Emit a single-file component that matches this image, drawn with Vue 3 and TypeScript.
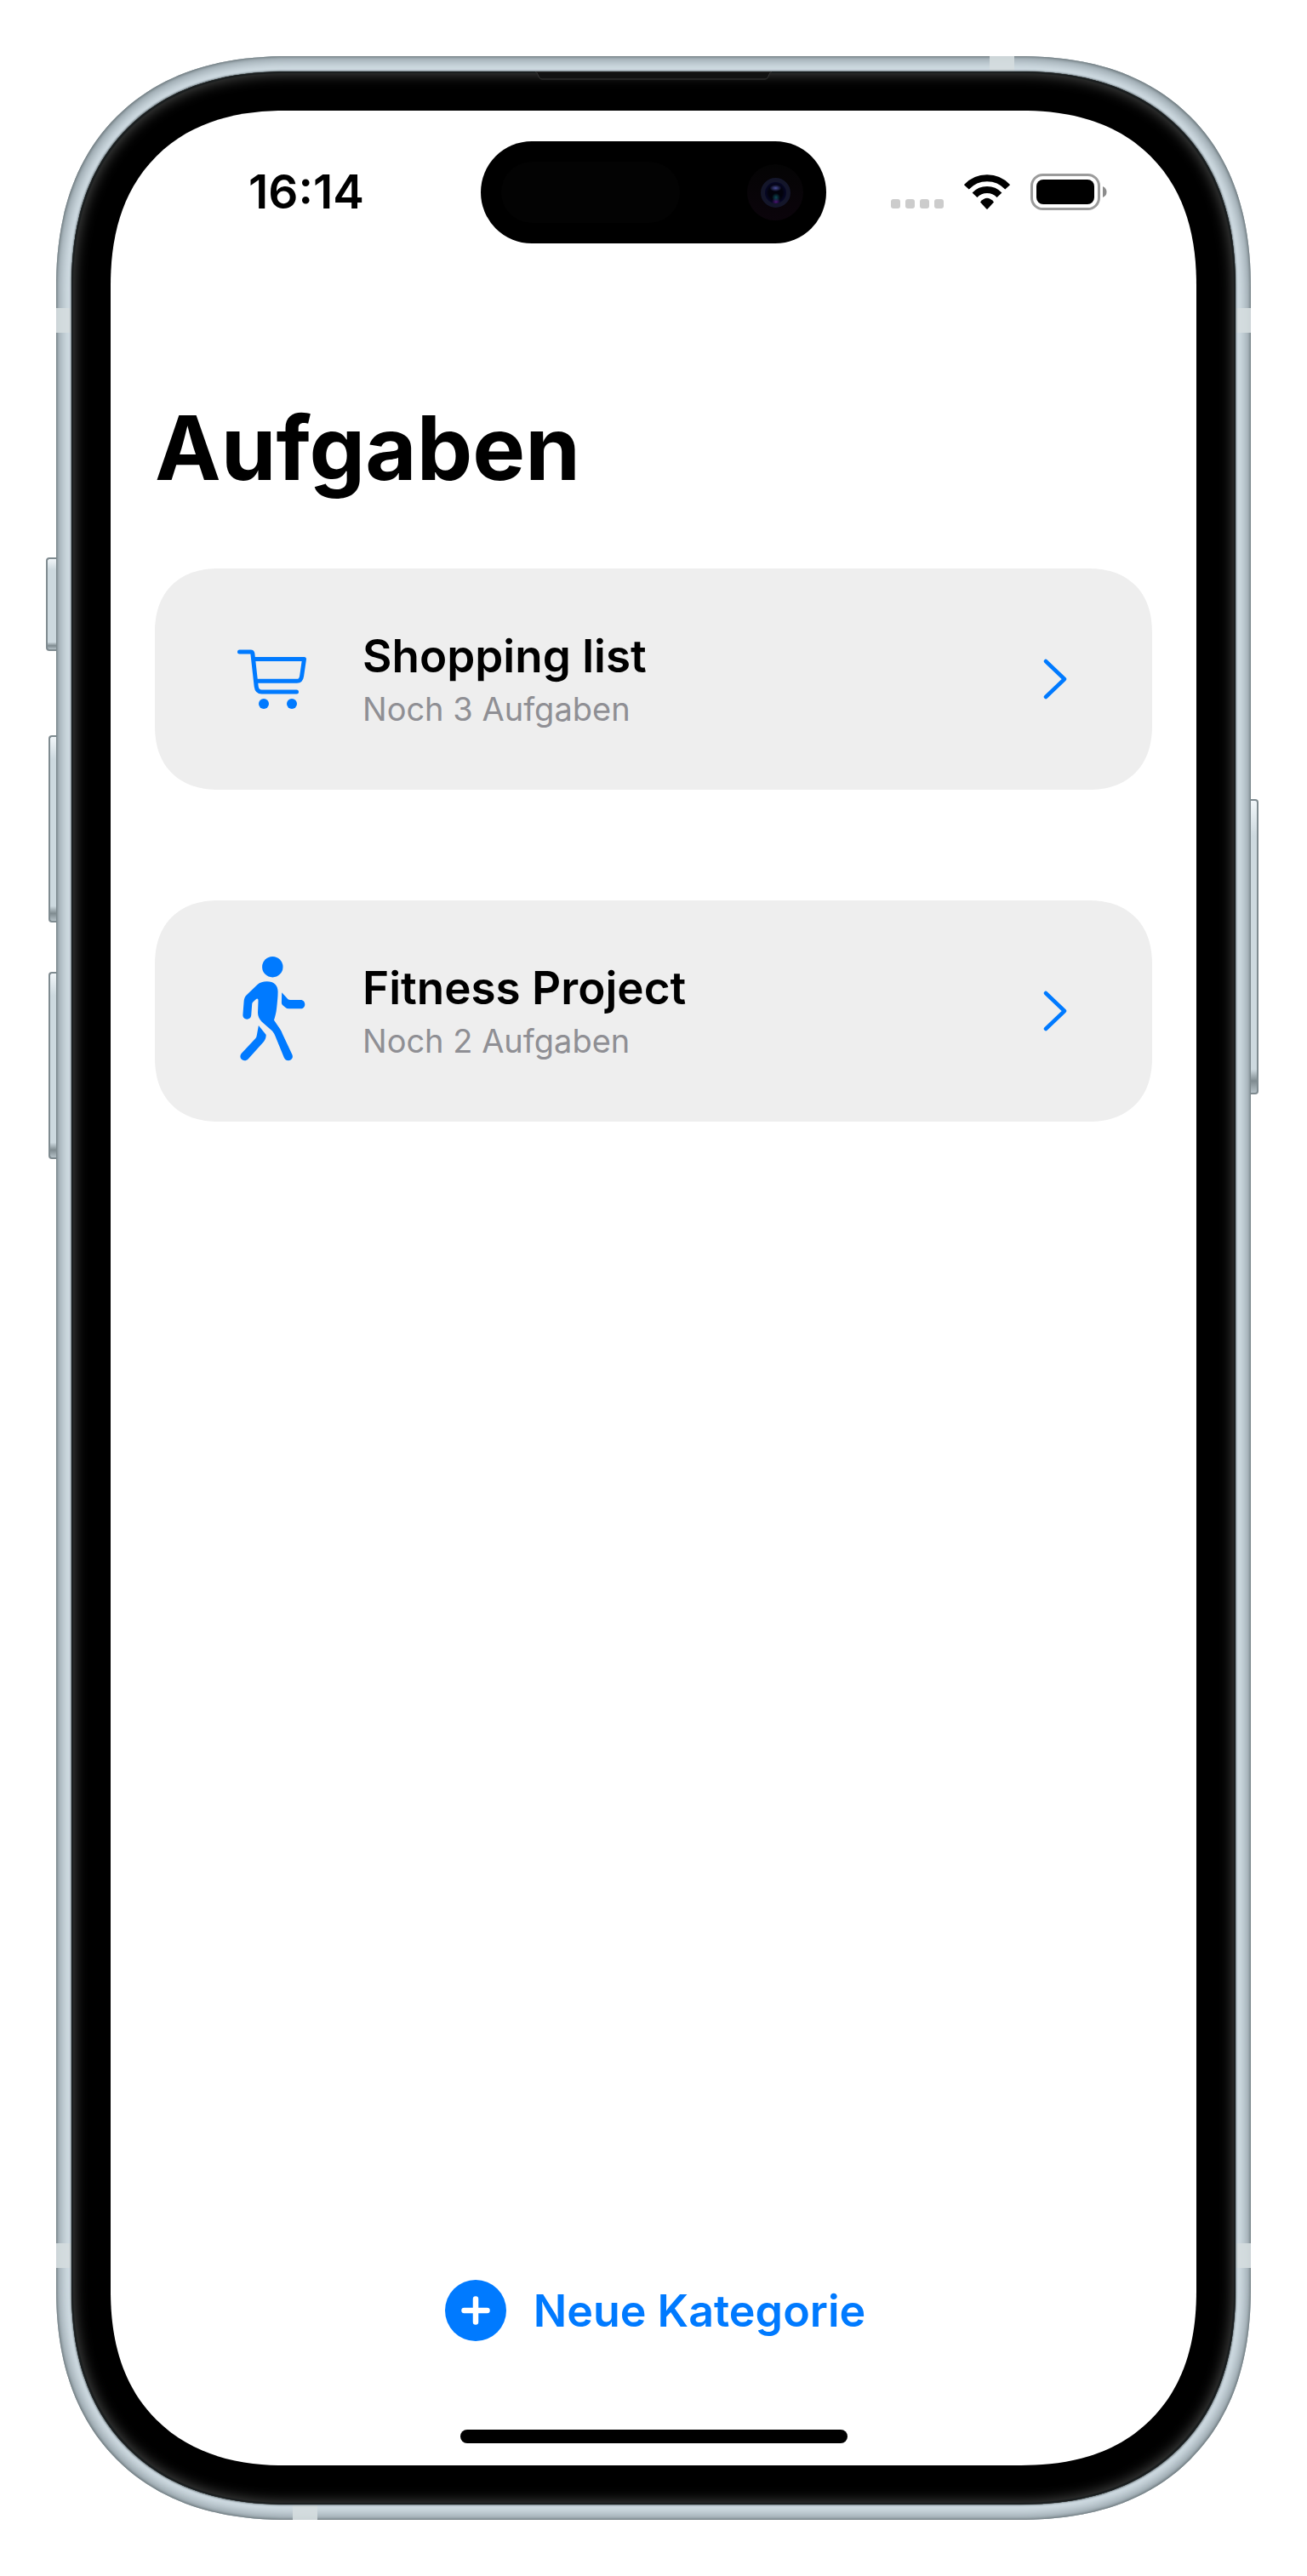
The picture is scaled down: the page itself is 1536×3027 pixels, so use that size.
<script setup lang="ts">
interface Category {
  id: string
  name: string
  open: number
  icon: 'cart' | 'walk'
}

const time = '16:14'

const categories: Category[] = [
  { id: 'shopping', name: 'Shopping list', open: 3, icon: 'cart' },
  { id: 'fitness', name: 'Fitness Project', open: 2, icon: 'walk' },
]
</script>

<template>
  <div class="page">
    <div class="phone">
      <span class="key key-action"></span>
      <span class="key key-up"></span>
      <span class="key key-down"></span>
      <span class="key key-power"></span>

      <div class="band">
        <span class="antenna side left upper"></span>
        <span class="antenna side right upper"></span>
        <span class="antenna side left lower"></span>
        <span class="antenna side right lower"></span>
        <span class="antenna edge top"></span>
        <span class="antenna edge bottom"></span>

        <div class="bezel">
          <svg class="speaker" width="278" height="10" viewBox="0 0 278 10" aria-hidden="true">
            <path d="M0 0C4 1 3 9 8 9H270C275 9 274 1 278 0Z" fill="#121212" stroke="#383838" />
          </svg>

          <div class="screen">
            <header class="status">
              <time class="clock">{{ time }}</time>
              <div class="island">
                <span class="sensor"></span>
                <span class="camera"><span class="lens"></span></span>
              </div>
              <div class="indicators">
                <span class="signal"><i v-for="n in 4" :key="n"></i></span>
                <svg class="wifi" width="54" height="41" viewBox="0 0 54 41" aria-hidden="true">
                  <path d="M2.8 14.8A33 33 0 0 1 51.2 14.8" fill="none" stroke="#000" stroke-width="8" />
                  <path d="M12.5 24.3A20 20 0 0 1 41.5 24.3" fill="none" stroke="#000" stroke-width="8" />
                  <path d="M19 32.4Q27 23.2 35 32.4L27.7 40.4Q27 41 26.3 40.4Z" fill="#000" />
                </svg>
                <svg class="battery" width="90" height="43" viewBox="0 0 90 43" aria-hidden="true">
                  <rect x="1.5" y="1.5" width="79" height="40" rx="13" fill="none" stroke="#9b9b9b" stroke-width="3" />
                  <rect x="7" y="7" width="68" height="29" rx="8" fill="#000" />
                  <path d="M85 15Q89.5 17 89.5 21.5T85 28Z" fill="#8c8c8c" />
                </svg>
              </div>
            </header>

            <main class="content">
              <h1>Aufgaben</h1>
              <nav class="list">
                <a v-for="c in categories" :key="c.id" class="card" :href="'#' + c.id">
                  <span class="icon">
                    <svg v-if="c.icon === 'cart'" width="82" height="70" viewBox="0 0 82 70" aria-hidden="true">
                      <g fill="none" stroke="#007aff" stroke-width="5" stroke-linecap="round" stroke-linejoin="round">
                        <path d="M2.5 3H15.5Q17.6 3 17.9 5.2L22.2 43.8Q23 50 28.5 50H69.5" />
                        <path d="M19.5 11.5H78.5L75.6 31.5Q74.800 37.3 70 37.3H22.5" />
                      </g>
                      <circle cx="31" cy="64" r="6" fill="#007aff" />
                      <circle cx="64" cy="64" r="6" fill="#007aff" />
                    </svg>
                    <svg v-else width="77" height="129" viewBox="0 0 77 129" aria-hidden="true">
                      <g fill="#007aff">
                        <circle cx="38.3" cy="12.2" r="12.2" />
                        <path d="M31.6 29.3C40 29.3 44.6 34 44.6 41.3C44.6 48 43.8 54 43.2 60C42.6 66 41.5 70 40 74.7L47 85Q49 88 50 91L61.5 115.5C64 122 54.5 125 51.8 118.7L41.5 93.5C40.5 91 39.5 89.5 38 87.5L25.5 76.5C22.5 73 21 70 21 66L21.5 52C21.5 49.5 20.3 49 18.8 50.2L15 53.7Q14.3 54.5 14.2 56L13.2 69.3C12.6 75.5 3.2 75 3.4 68.5L4.6 53C4.8 49.5 5.5 47.5 8 45L20.5 33C23.5 30.5 27 29.3 31.6 29.3Z" />
                        <path d="M49.2 42.3L56.5 50.2Q57.5 51 59 51H71.2C78 51 78 61.3 71.2 61.3H57.5Q55 61.3 53.3 59.8L50 57Q48.8 56 48.9 54Z" />
                        <path d="M21.9 81L30.7 92C30.6 95 30 97.5 28 100L9.8 120.3C4.8 125.5 -2.5 119.5 1.6 114L18 96.5Q19.4 95 19.7 93Z" />
                      </g>
                    </svg>
                  </span>
                  <span class="text">
                    <span class="name">{{ c.name }}</span>
                    <span class="sub">Noch {{ c.open }} Aufgaben</span>
                  </span>
                  <svg class="chevron" width="28" height="48" viewBox="0 0 28 48" aria-hidden="true">
                    <path d="M3 3L25 24L3 45" fill="none" stroke="#007aff" stroke-width="4.5" stroke-linecap="round" stroke-linejoin="round" />
                  </svg>
                </a>
              </nav>
            </main>

            <footer class="footer">
              <button type="button" class="add">
                <svg width="72" height="72" viewBox="0 0 72 72" aria-hidden="true">
                  <circle cx="36" cy="36" r="36" fill="#007aff" />
                  <path d="M22.5 36H49.5M36 22.5V49.5" stroke="#fff" stroke-width="6.5" stroke-linecap="round" />
                </svg>
                <span>Neue Kategorie</span>
              </button>
              <span class="home"></span>
            </footer>
          </div>
        </div>
      </div>
    </div>
  </div>
</template>

<style>
body {
  margin: 0;
  background: #fff;
}
</style>

<style scoped>
.page,
.page * {
  box-sizing: border-box;
}

.page {
  display: flex;
  min-height: 100vh;
  padding: 66px;
  background: #fff;
  font-family: Inter, "Liberation Sans", sans-serif;
  color: #000;
}

.phone {
  position: relative;
  display: flex;
  flex: 1;
}

.band,
.bezel,
.screen {
  display: flex;
  flex: 1;
  position: relative;
}

.band {
  padding: 18px;
  border-radius: 243px;
  background: #d3dfe6;
  box-shadow: inset 0 0 3px 1px #6d787c, inset 0 0 14px 5px #8a979e;
}

.bezel {
  padding: 46px;
  border-radius: 225px;
  background: #000;
  box-shadow: 0 0 2px 1px #6f7b80, inset 0 0 0 2px #1b1f20, inset 0 0 16px 3px #4a4b4a;
}

.screen {
  flex-direction: column;
  border-radius: 179px;
  background: #fff;
}

@supports (corner-shape: superellipse(1.2)) {
  .band {
    border-radius: 273px;
    corner-shape: superellipse(1.2);
  }
  .bezel {
    border-radius: 254px;
    corner-shape: superellipse(1.2);
  }
  .screen {
    border-radius: 206px;
    corner-shape: superellipse(1.2);
  }
}

/* Side keys */
.key {
  position: absolute;
  width: 12px;
  border: 2px solid #7f8b90;
  background: linear-gradient(#f1f6f9, #cdd9df 12%, #cdd9df 92%, #7f8b90 96%, #b4c0c6);
}
.key-action {
  left: -12px;
  top: 589px;
  height: 110px;
  border-right: 0;
  border-radius: 4px 0 0 4px;
}
.key-up,
.key-down {
  left: -9px;
  height: 220px;
  border-right: 0;
  border-radius: 4px 0 0 4px;
}
.key-up {
  top: 798px;
}
.key-down {
  top: 1076px;
}
.key-power {
  right: -9px;
  top: 873px;
  height: 347px;
  border-left: 0;
  border-radius: 0 4px 4px 0;
}

/* Antenna lines */
.antenna {
  position: absolute;
  background: #d5dddf;
  opacity: 0.9;
}
.side {
  width: 18px;
  height: 29px;
}
.edge {
  width: 29px;
  height: 18px;
}
.left {
  left: 0;
}
.right {
  right: 0;
}
.upper {
  top: 296px;
}
.lower {
  bottom: 296px;
}
.top {
  top: 0;
  right: 278px;
}
.bottom {
  bottom: 0;
  left: 278px;
}

.speaker {
  position: absolute;
  top: 0;
  left: 50%;
  margin-left: -139px;
}

/* Status bar */
.status {
  display: grid;
  grid-template-columns: 1fr auto 1fr;
  align-items: center;
  padding-top: 36px;
}

.clock {
  padding: 0 0 2px 162px;
  font-size: 55px;
  line-height: 64px;
  font-weight: 600;
}

.island {
  display: flex;
  align-items: center;
  justify-content: space-between;
  width: 406px;
  height: 120px;
  padding: 0 27px 0 24px;
  border-radius: 60px;
  background: #000;
}

.sensor {
  width: 210px;
  height: 72px;
  border-radius: 36px;
  background: #030303;
}

.camera {
  display: flex;
  align-items: center;
  justify-content: center;
  width: 66px;
  height: 66px;
  border-radius: 50%;
  background: linear-gradient(#040404, #0b040b);
}

.lens {
  width: 35px;
  height: 35px;
  border: 5px solid #14162a;
  border-radius: 50%;
  background:
    radial-gradient(ellipse 7px 4px at 50% 28%, #4a4f9c, transparent),
    radial-gradient(circle 5px at 52% 72%, #0d4a55, transparent),
    radial-gradient(circle 5px at 52% 92%, #4d1470, transparent),
    radial-gradient(circle, #02020c 45%, #0c0e48);
}

.indicators {
  display: flex;
  align-items: center;
  justify-content: flex-end;
  gap: 24px;
  padding: 0 105px 2px 0;
}

.signal {
  display: flex;
  gap: 6px;
  padding-top: 28px;
}
.signal i {
  width: 11px;
  height: 11px;
  border-radius: 3px;
  background: #ccc;
}

/* Content */
.content {
  flex: 1;
  padding: 174px 52px 0;
}

h1 {
  margin: 0;
  font-size: 104px;
  line-height: 132px;
  font-weight: 700;
}

.list {
  display: flex;
  flex-direction: column;
  gap: 130px;
  margin-top: 76px;
}

.card {
  display: flex;
  align-items: center;
  min-height: 260px;
  padding: 64px 100px 64px 98px;
  border-radius: 65px;
  background: #eee;
  color: inherit;
  text-decoration: none;
}

@supports (corner-shape: superellipse(1.2)) {
  .card {
    border-radius: 76px;
    corner-shape: superellipse(1.2);
  }
}

.icon {
  display: flex;
  justify-content: center;
  width: 80px;
}
.icon svg {
  flex: none;
}

.text {
  display: flex;
  flex: 1;
  flex-direction: column;
  gap: 6px;
  margin-left: 66px;
}

.name {
  font-size: 53px;
  line-height: 64px;
  font-weight: 600;
}

.sub {
  font-size: 38px;
  line-height: 48px;
  color: #8f8f94;
}

/* Footer */
.footer {
  display: flex;
  flex-direction: column;
  align-items: center;
  gap: 104px;
  padding-bottom: 26px;
}

.add {
  display: flex;
  align-items: center;
  gap: 32px;
  padding: 0 0 0 4px;
  border: 0;
  background: none;
  font: 600 52px/64px Inter, "Liberation Sans", sans-serif;
  color: #007aff;
}
.add span {
  padding-top: 2px;
}

.home {
  width: 455px;
  height: 16px;
  border-radius: 8px;
  background: #000;
}
</style>
